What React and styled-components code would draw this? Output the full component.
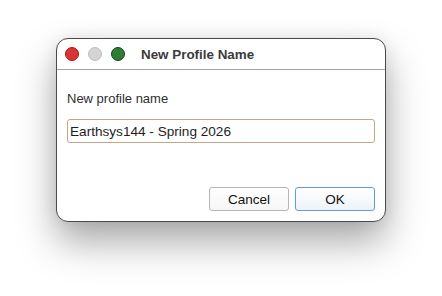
import React from "react";
import styled, { createGlobalStyle } from "styled-components";

const GlobalStyle = createGlobalStyle`
  html, body {
    margin: 0;
    padding: 0;
    background: #ffffff;
    font-family: "Liberation Sans", Arial, sans-serif;
  }
`;

const Page = styled.div`
  width: 442px;
  height: 296px;
  display: flex;
  justify-content: center;
  align-items: flex-start;
  padding-top: 38px;
  box-sizing: border-box;
`;

const Window = styled.div`
  width: 330px;
  height: 184px;
  box-sizing: border-box;
  border: 1px solid #4a4a4a;
  border-radius: 12px;
  background: #ffffff;
  box-shadow: 0 20px 38px rgba(0, 0, 0, 0.34), 0 0 16px rgba(0, 0, 0, 0.08);
  display: flex;
  flex-direction: column;
  overflow: hidden;
`;

const TitleBar = styled.div`
  height: 30px;
  display: flex;
  align-items: center;
  padding-left: 8px;
  border-bottom: 1px solid #a4a4a4;
`;

const Lights = styled.div`
  display: flex;
  gap: 9px;
  margin-right: 16px;
`;

const Light = styled.span`
  width: 12px;
  height: 12px;
  border-radius: 50%;
  background: ${(p) => p.fill};
  border: 1px solid ${(p) => p.edge};
`;

const Title = styled.div`
  font-size: 13.4px;
  font-weight: bold;
  color: #3a3a3a;
`;

const Body = styled.div`
  flex: 1;
  display: flex;
  flex-direction: column;
  padding: 21px 10px 10px 10px;
`;

const Label = styled.div`
  font-size: 13px;
  color: #2e2e2e;
  margin-bottom: 13px;
`;

const Field = styled.div`
  height: 24px;
  box-sizing: border-box;
  border: 1px solid #c4a58c;
  border-radius: 3px;
  display: flex;
  align-items: center;
  padding-left: 2px;
  font-size: 13.6px;
  color: #1e1e1e;
`;

const Buttons = styled.div`
  margin-top: auto;
  display: flex;
  justify-content: flex-end;
  gap: 6px;
`;

const Button = styled.div`
  width: 80px;
  height: 24px;
  box-sizing: border-box;
  border-radius: 3px;
  display: flex;
  align-items: center;
  justify-content: center;
  font-size: 13.5px;
  color: #111;
  border: 1px solid ${(p) => (p.primary ? "#5a9fe6" : "#b6b6b6")};
  background: ${(p) =>
    p.primary
      ? "linear-gradient(#ffffff, #eef3f9)"
      : "linear-gradient(#ffffff, #f6f6f6)"};
`;

export default function App() {
  return (
    <>
      <GlobalStyle />
      <Page>
        <Window>
          <TitleBar>
            <Lights>
              <Light fill="#d83434" edge="#b50f0f" />
              <Light fill="#d4d4d4" edge="#bdbdbd" />
              <Light fill="#2f7d32" edge="#0d4a10" />
            </Lights>
            <Title>New Profile Name</Title>
          </TitleBar>
          <Body>
            <Label>New profile name</Label>
            <Field>Earthsys144 - Spring 2026</Field>
            <Buttons>
              <Button>Cancel</Button>
              <Button primary>OK</Button>
            </Buttons>
          </Body>
        </Window>
      </Page>
    </>
  );
}
